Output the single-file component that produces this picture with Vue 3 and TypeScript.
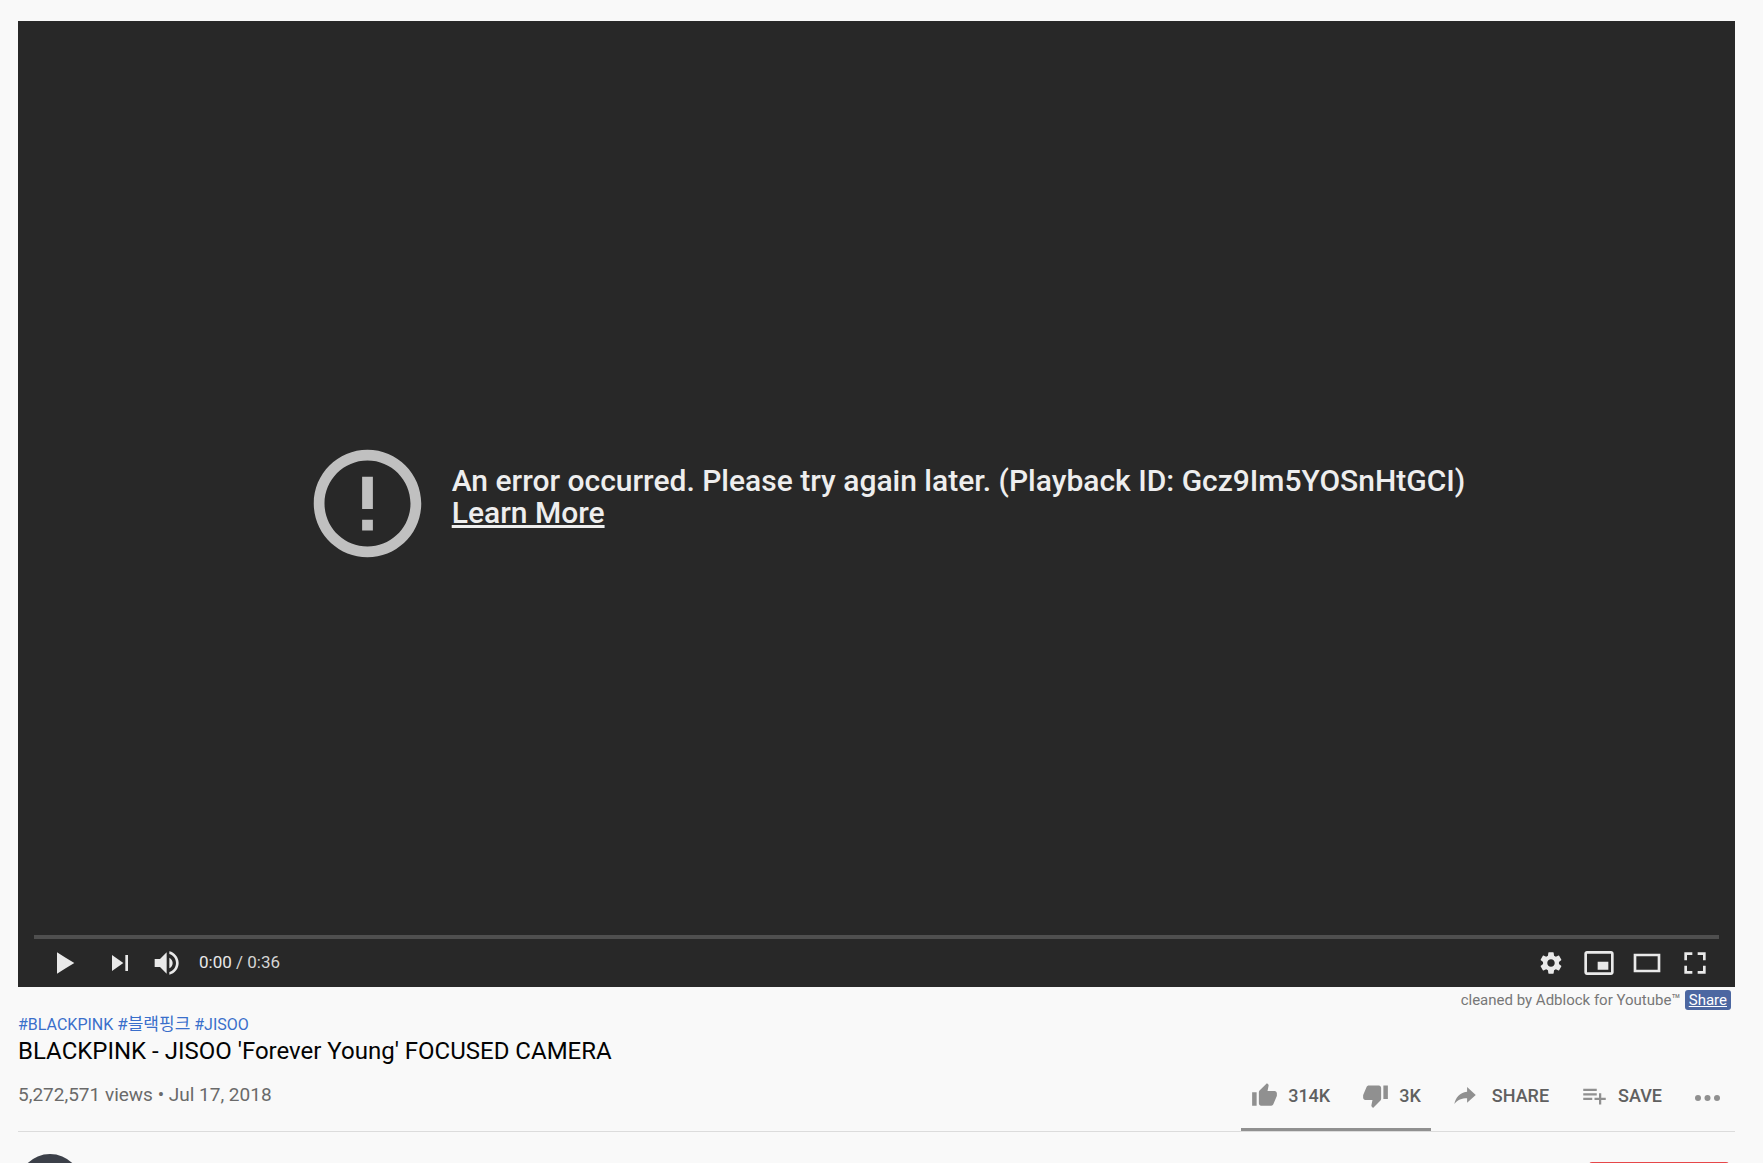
<script setup lang="ts">
interface Tag {
  label: string
  href: string
  lang: string
}

interface PlayerControl {
  name: string
  path: string
}

const tags: Tag[] = [
  { label: '#BLACKPINK', href: '#blackpink', lang: 'en' },
  { label: '#블랙핑크', href: '#블랙핑크', lang: 'ko' },
  { label: '#JISOO', href: '#jisoo', lang: 'en' },
]

const leftControls: PlayerControl[] = [
  { name: 'Play', path: 'M12,26 18.5,22 18.5,14 12,10z M18.5,22 25,18 25,18 18.5,14z' },
  { name: 'Next', path: 'M12,24 20.5,18 12,12V24z M22,12v12h2V12h-2z' },
  {
    name: 'Mute',
    path: 'M8,21 L12,21 L17,26 L17,10 L12,15 L8,15 L8,21 Z M19,14 L19,22 C20.48,21.32 21.5,19.77 21.5,18 C21.5,16.26 20.48,14.74 19,14 Z M19,11.29 C21.89,12.15 24,14.83 24,18 C24,21.17 21.89,23.85 19,24.71 L19,26.77 C23.01,25.86 26,22.28 26,18 C26,13.72 23.01,10.14 19,9.23 L19,11.29 Z',
  },
]

const rightControls: PlayerControl[] = [
  {
    name: 'Settings',
    path: 'm 23.94,18.78 c .03,-0.25 .05,-0.51 .05,-0.78 0,-0.27 -0.02,-0.52 -0.05,-0.78 l 1.68,-1.32 c .15,-0.12 .19,-0.33 .09,-0.51 l -1.6,-2.76 c -0.09,-0.17 -0.31,-0.24 -0.48,-0.17 l -1.99,.8 c -0.41,-0.32 -0.86,-0.58 -1.35,-0.78 l -0.30,-2.12 c -0.02,-0.19 -0.19,-0.33 -0.39,-0.33 l -3.2,0 c -0.2,0 -0.36,.14 -0.39,.33 l -0.30,2.12 c -0.48,.2 -0.93,.47 -1.35,.78 l -1.99,-0.8 c -0.18,-0.07 -0.39,0 -0.48,.17 l -1.6,2.76 c -0.10,.17 -0.05,.39 .09,.51 l 1.68,1.32 c -0.03,.25 -0.05,.52 -0.05,.78 0,.26 .02,.52 .05,.78 l -1.68,1.32 c -0.15,.12 -0.19,.33 -0.09,.51 l 1.6,2.76 c .09,.17 .31,.24 .48,.17 l 1.99,-0.8 c .41,.32 .86,.58 1.35,.78 l .30,2.12 c .02,.19 .19,.33 .39,.33 l 3.2,0 c .2,0 .36,-0.14 .39,-0.33 l .30,-2.12 c .48,-0.2 .93,-0.47 1.35,-0.78 l 1.99,.8 c .18,.07 .39,0 .48,-0.17 l 1.6,-2.76 c .09,-0.17 .05,-0.39 -0.09,-0.51 l -1.68,-1.32 0,0 z m -5.94,2.01 c -1.54,0 -2.8,-1.25 -2.8,-2.8 0,-1.54 1.25,-2.8 2.8,-2.8 1.54,0 2.8,1.25 2.8,2.8 0,1.54 -1.25,2.8 -2.8,2.8 l 0,0 z',
  },
  {
    name: 'Miniplayer',
    path: 'M25,17 L17,17 L17,23 L25,23 Z M29,25 L29,10.98 C29,9.88 28.1,9 27,9 L9,9 C7.9,9 7,9.88 7,10.98 L7,25 C7,26.1 7.9,27 9,27 L27,27 C28.1,27 29,26.1 29,25 Z M27,25.02 L9,25.02 L9,10.97 L27,10.97 L27,25.02 Z',
  },
  { name: 'Theater mode', path: 'm 28,11 0,14 -20,0 0,-14 z m -18,2 16,0 0,10 -16,0 0,-10 z' },
  {
    name: 'Full screen',
    path: 'm 10,16 2,0 0,-4 4,0 0,-2 -6,0 z M 20,10 l 0,2 4,0 0,4 2,0 0,-6 z M 24,24 l -4,0 0,2 6,0 0,-6 -2,0 z M 12,20 l -2,0 0,6 6,0 0,-2 -4,0 z',
  },
]
</script>

<template>
  <main class="watch">
    <section class="player" aria-label="Video player">
      <div class="error">
        <svg class="error-icon" viewBox="0 0 24 24" aria-hidden="true">
          <path d="M11 15h2v2h-2zm0-8h2v6h-2zm1-5C6.48 2 2 6.48 2 12s4.480 10 10 10 10-4.480 10-10S17.520 2 12 2zm0 18c-4.420 0-8-3.580-8-8s3.580-8 8-8 8 3.580 8 8-3.580 8-8 8z" />
        </svg>
        <p class="error-text">
          An error occurred. Please try again later. (Playback ID: Gcz9Im5YOSnHtGCI)<br />
          <a href="#help">Learn More</a>
        </p>
      </div>
      <div class="chrome">
        <div class="progress"></div>
        <div class="controls">
          <button v-for="c in leftControls" :key="c.name" type="button" class="control" :aria-label="c.name">
            <svg viewBox="0 0 36 36"><path fill-rule="evenodd" :d="c.path" /></svg>
          </button>
          <div class="time">0:00 <span>/ 0:36</span></div>
          <button v-for="c in rightControls" :key="c.name" type="button" class="control" :aria-label="c.name">
            <svg viewBox="0 0 36 36"><path fill-rule="evenodd" :d="c.path" /></svg>
          </button>
        </div>
      </div>
    </section>

    <div class="cleaned">
      <span>cleaned by Adblock for Youtube™</span>
      <a class="cleaned-share" href="#share">Share</a>
    </div>

    <nav class="tags">
      <template v-for="t in tags" :key="t.label"><a :href="t.href" :lang="t.lang">{{ t.label }}</a>{{ ' ' }}</template>
    </nav>
    <h1 class="title">BLACKPINK - JISOO 'Forever Young' FOCUSED CAMERA</h1>

    <div class="info">
      <p class="views">5,272,571 views • Jul 17, 2018</p>
      <div class="actions">
        <div class="rating">
          <button type="button" class="action">
            <svg viewBox="0 0 24 24"><path d="M1 21h4V9H1v12zm22-11c0-1.100-.9-2-2-2h-6.310l.95-4.570.03-.32c0-.41-.17-.79-.44-1.060L14.170 1 7.590 7.590C7.220 7.950 7 8.450 7 9v10c0 1.100.9 2 2 2h9c.83 0 1.540-.5 1.840-1.220l3.020-7.050c.09-.23.14-.47.14-.73v-2z" /></svg>
            314K
          </button>
          <button type="button" class="action">
            <svg viewBox="0 0 24 24"><path d="M15 3H6c-.83 0-1.540.5-1.840 1.220l-3.020 7.050c-.09.23-.14.47-.14.73v2c0 1.100.9 2 2 2h6.310l-.95 4.570-.03.32c0 .41.17.79.44 1.060L9.830 23l6.590-6.590c.36-.36.58-.86.58-1.410V5c0-1.100-.9-2-2-2zm4 0v12h4V3h-4z" /></svg>
            3K
          </button>
        </div>
        <button type="button" class="action share">
          <svg viewBox="0 0 24 24"><path d="M14.300 8.700V4.500l7.700 7-7.700 7v-4.100C9.500 14.400 6 15.700 3 19.500c1-5.200 4.300-9.800 11.300-10.800z" /></svg>
          SHARE
        </button>
        <button type="button" class="action">
          <svg viewBox="0 0 24 24"><path d="M14 10H2v2h12v-2zm0-4H2v2h12V6zm4 8v-4h-2v4h-4v2h4v4h2v-4h4v-2h-4zM2 16h8v-2H2v2z" /></svg>
          SAVE
        </button>
        <button type="button" class="action" aria-label="More actions">
          <svg viewBox="0 0 27 27"><circle cx="4" cy="16" r="3" /><circle cx="13.500" cy="16" r="3" /><circle cx="23" cy="16" r="3" /></svg>
        </button>
      </div>
    </div>

    <div class="owner">
      <a class="avatar" href="#channel" aria-label="Channel"></a>
      <button type="button" class="subscribe" aria-label="Subscribe"></button>
    </div>
  </main>
</template>

<style>
body {
  margin: 0;
  background: #f9f9f9;
}
</style>

<style scoped>
.watch {
  box-sizing: border-box;
  height: 100vh;
  overflow: hidden;
  padding: 21px 28px 0 18px;
  font-family: Roboto, "Noto Sans CJK KR", sans-serif;
  color: #030303;
}

button {
  padding: 0;
  border: 0;
  background: none;
  font: inherit;
  color: inherit;
  cursor: pointer;
}

svg {
  display: block;
  flex: none;
  fill: currentColor;
}

.player {
  display: grid;
  aspect-ratio: 16 / 9;
  background: #282828;
}

.error,
.chrome {
  grid-area: 1 / 1;
}

.error {
  display: flex;
  align-self: center;
  justify-content: center;
  align-items: flex-start;
  gap: 20px;
  padding-left: 15px;
}

.error-icon {
  width: 129px;
  height: 129px;
  color: #c0c0c0;
}

.error-text {
  margin: 26px 0 0;
  font-size: 30px;
  font-weight: 500;
  line-height: 32px;
  color: #eee;
}

.error-text a {
  color: inherit;
}

.chrome {
  align-self: end;
  padding: 0 16px;
  color: #e9e9e9;
}

.progress {
  height: 4px;
  background: #4f4f4f;
}

.controls {
  display: flex;
  align-items: center;
}

.control {
  width: 48px;
  height: 48px;
}

.control:first-child {
  padding: 0 7px;
  width: 62px;
}

.control svg {
  width: 48px;
  height: 48px;
}

.time {
  flex: 1;
  padding: 0 0 2px 7px;
  font-size: 17px;
  line-height: 24px;
}

.time span {
  color: #d5d5d5;
}

.cleaned {
  display: flex;
  justify-content: flex-end;
  align-items: center;
  gap: 4px;
  height: 27px;
  padding-right: 4px;
  font-size: 15px;
  color: #777;
}

.cleaned-share {
  padding: 0 4px;
  border-radius: 3px;
  background: #4c67a1;
  line-height: 20px;
  color: #fff;
}

.tags {
  font-size: 16px;
  line-height: 20px;
}

.tags a {
  color: #3a6fcb;
  text-decoration: none;
}

.tags a:lang(ko) {
  font-size: 17px;
}

.title {
  margin: 0;
  font-size: 24px;
  font-weight: 400;
  line-height: 32px;
}

.info {
  display: flex;
  justify-content: space-between;
  height: 64px;
  border-bottom: 1px solid #dcdcdc;
}

.views {
  margin: 16px 0 0;
  font-size: 19px;
  line-height: 24px;
  color: #6a6a6a;
}

.actions,
.rating {
  display: flex;
}

.actions {
  padding-right: 14px;
}

.rating {
  padding: 0 10px;
  border-bottom: 3px solid #909090;
}

.action {
  display: flex;
  align-items: center;
  gap: 10px;
  height: 58px;
  font-size: 18px;
  font-weight: 500;
  color: #606060;
}

.action + .action {
  margin-left: 32px;
}

.action svg {
  width: 27px;
  height: 27px;
  color: #909090;
}

.share {
  gap: 14px;
  margin-left: 20px;
}

.owner {
  display: flex;
  justify-content: space-between;
  align-items: flex-start;
  padding: 22px 6px 0 0;
}

.avatar {
  width: 64px;
  height: 64px;
  border-radius: 50%;
  background: #3c4049;
}

.subscribe {
  width: 140px;
  height: 48px;
  margin-top: 8px;
  border-radius: 3px;
  background: #e6474a;
}
</style>
